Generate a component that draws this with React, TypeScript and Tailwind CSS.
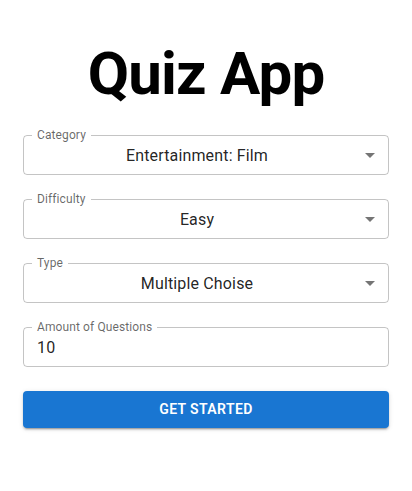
import React from "react";

function Arrow() {
  return (
    <svg
      viewBox="0 0 24 24"
      className="absolute right-[6px] top-1/2 -translate-y-1/2 w-6 h-6"
      fill="rgba(0,0,0,0.54)"
    >
      <path d="M7 10l5 5 5-5z" />
    </svg>
  );
}

function Field({
  label,
  value,
  select,
}: {
  label: string;
  value: string;
  select?: boolean;
}) {
  return (
    <div className="relative h-10 rounded-[4px] border border-[rgba(0,0,0,0.23)]">
      <span className="absolute left-[8px] -top-[7px] px-[5px] bg-white text-[12px] leading-[12px] tracking-[0.11px] text-[rgba(0,0,0,0.6)] whitespace-nowrap">
        {label}
      </span>
      <div
        className={
          select
            ? "h-full flex items-center justify-center pl-[13px] pr-[31px] text-[16px] leading-[23px] tracking-[0.15px] text-[rgba(0,0,0,0.87)]"
            : "h-full flex items-center pl-[13px] pr-[13px] text-[16px] leading-[23px] tracking-[0.15px] text-[rgba(0,0,0,0.87)]"
        }
      >
        {value}
      </div>
      {select && <Arrow />}
    </div>
  );
}

export default function App() {
  return (
    <div
      className="min-h-[491px] bg-white px-[23px] pt-[44px]"
      style={{ fontFamily: "Roboto, 'Liberation Sans', sans-serif" }}
    >
      <h1 className="text-center text-[60px] leading-[60px] font-bold tracking-[-0.8px] text-black">
        Quiz App
      </h1>
      <div className="mt-[31px] flex flex-col gap-6">
        <Field label="Category" value="Entertainment: Film" select />
        <Field label="Difficulty" value="Easy" select />
        <Field label="Type" value="Multiple Choise" select />
        <Field label="Amount of Questions" value="10" />
        <button className="h-[36.5px] w-full rounded-[4px] bg-[#1976d2] text-white text-[14px] font-semibold uppercase tracking-[0.4px] shadow-[0px_3px_1px_-2px_rgba(0,0,0,0.2),0px_2px_2px_0px_rgba(0,0,0,0.14),0px_1px_5px_0px_rgba(0,0,0,0.12)]">
          Get Started
        </button>
      </div>
    </div>
  );
}
